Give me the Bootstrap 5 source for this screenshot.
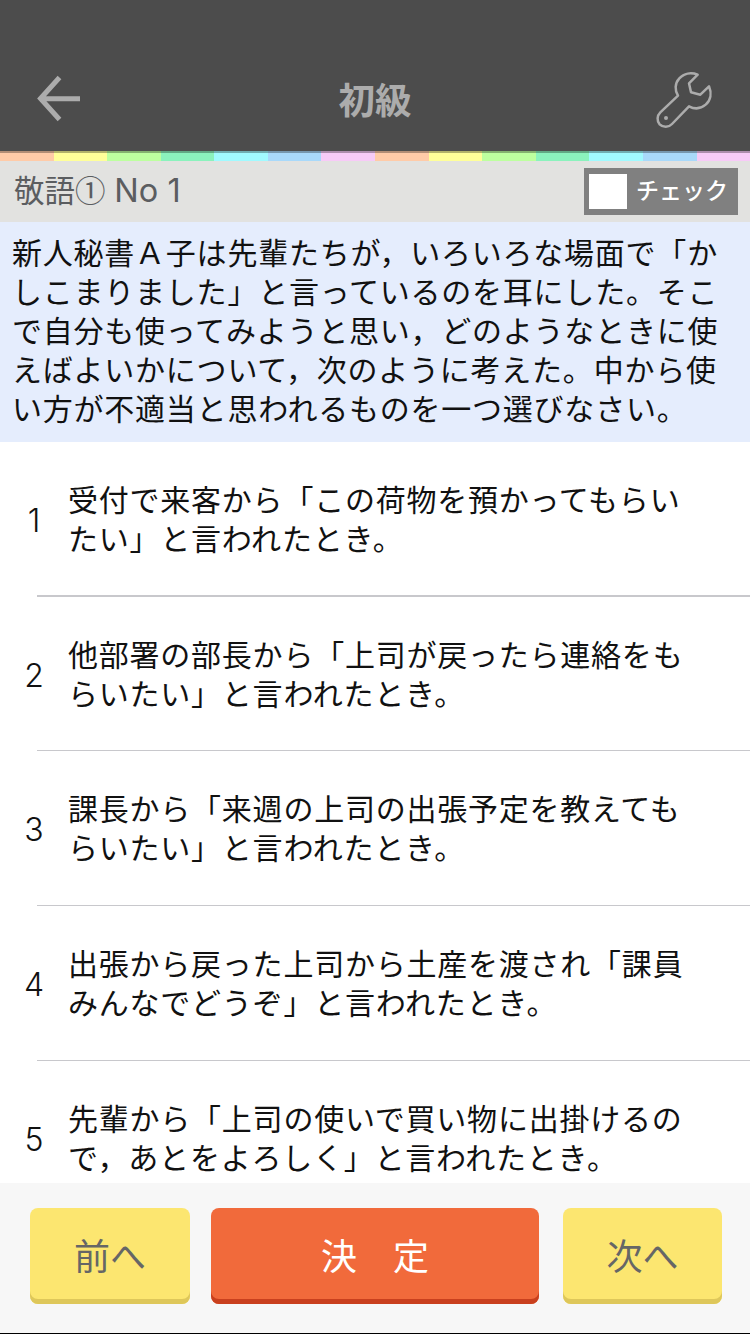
<!DOCTYPE html>
<html lang="ja">
<head>
<meta charset="utf-8">
<meta name="viewport" content="width=device-width, initial-scale=1">
<title>初級</title>
<link href="https://cdn.jsdelivr.net/npm/bootstrap@5.3.0/dist/css/bootstrap.min.css" rel="stylesheet">
<style>
body{font-family:"Noto Sans CJK JP",sans-serif;color:#111;height:1334px;overflow:hidden;background:#fff}
.topbar{height:153px;background:#4c4c4c;padding:70px 35px 0 35px;border-bottom:2px solid rgba(0,0,0,.3);background-clip:padding-box;margin-bottom:-2px;position:relative}
.topbar h1{font-size:36.5px;font-weight:700;color:#acacac;line-height:58px}
.side{width:60px;height:60px}
.stripes{height:10px}
.stripes i{flex:1 1 0}
.subbar{height:61px;background:#e2e2e0;padding:0 12px 0 14px;color:#5b5d60;font-size:30.5px}
.latin{font-family:Inter,sans-serif;font-size:32.5px;margin-left:2px}
.checkbtn{width:154px;height:47px;background:#808080;color:#fff;font-size:23px;font-weight:500;padding-left:5px;margin-top:-1px}
.checkbtn .label{margin:-4px 0 0 9px}
.tick{width:38px;height:35px;background:#fff}
.body-text{font-size:30px;letter-spacing:.77px;line-height:39px;white-space:nowrap}
.question{height:220px;background:#e5edfd;padding:10px 12px}
.choices{height:741px}
.choice{height:154px;padding-bottom:2px}
.choice.short{height:153px}
.choice .num{width:68px;font-family:Inter,sans-serif;font-size:32px;font-weight:300;text-align:center;padding-top:6px}
.rule{height:1px;background:#c8c8cc;margin-left:37px}
.rule.thick{height:2px}
.actions{height:151px;background:#f7f7f7;padding:25px 28px 0 30px;border-bottom:1px solid #000}
.key{height:96px;border:0;border-radius:8px;font-size:36px;font-weight:400;line-height:1;padding:0 0 5px;box-shadow:inset 0 -5px 0 #dec75a}
.key.soft,.key.soft:hover{background:#fce670;color:#666;width:160px}
.key.next,.key.next:hover{width:159px}
.key.main,.key.main:hover{background:#f16a3b;color:#fff;width:328px;margin-left:-3px;box-shadow:inset 0 -5px 0 #c9401e}
</style>
</head>
<body class="d-flex flex-column">
<header class="topbar d-flex justify-content-between flex-shrink-0">
  <svg class="side" viewBox="35 70 60 60" fill="none" stroke="#acacac" stroke-width="5"><path d="M59.5 77.500L40.500 98.500L59.500 119.500M40 98.700H80"/></svg>
  <h1 class="mb-0">初級</h1>
  <svg class="side" viewBox="285 30 180 180" fill="none" stroke="#acacac" stroke-width="7.500" stroke-linejoin="round"><path d="M413 44L387 70L393 97L421 104L447 79C456 100 452 121 437 134C423 146 404 148 387 139L336 192C326 203 309 203 299 193C290 183 291 167 301 157L354 107C344 91 344 70 358 55C372 40 393 36 413 44Z"/><circle cx="318" cy="174" r="6" fill="#acacac" stroke="none"/></svg>
</header>
<div class="stripes d-flex flex-shrink-0">
  <i style="background:#ffcba8"></i><i style="background:#ffff99"></i><i style="background:#bdff9f"></i><i style="background:#8bf2bd"></i><i style="background:#a1faff"></i><i style="background:#a9d9fa"></i><i style="background:#f7cbf7"></i><i style="background:#ffcba8"></i><i style="background:#ffff99"></i><i style="background:#bdff9f"></i><i style="background:#8bf2bd"></i><i style="background:#a1faff"></i><i style="background:#a9d9fa"></i><i style="background:#f7cbf7"></i>
</div>
<div class="subbar d-flex justify-content-between align-items-center flex-shrink-0">
  <div class="text-nowrap">敬語① <span class="latin">No 1</span></div>
  <div class="checkbtn d-flex align-items-center"><span class="tick"></span><span class="label text-nowrap">チェック</span></div>
</div>
<section class="question body-text flex-shrink-0">新人秘書Ａ子は先輩たちが，いろいろな場面で「か<br>しこまりました」と言っているのを耳にした。そこ<br>で自分も使ってみようと思い，どのようなときに使<br>えばよいかについて，次のように考えた。中から使<br>い方が不適当と思われるものを一つ選びなさい。</section>
<main class="choices overflow-hidden flex-shrink-0">
  <div class="choice short d-flex align-items-center"><span class="num">1</span><div class="body-text">受付で来客から「この荷物を預かってもらい<br>たい」と言われたとき。</div></div>
  <div class="rule thick"></div>
  <div class="choice short d-flex align-items-center"><span class="num">2</span><div class="body-text">他部署の部長から「上司が戻ったら連絡をも<br>らいたい」と言われたとき。</div></div>
  <div class="rule"></div>
  <div class="choice d-flex align-items-center"><span class="num">3</span><div class="body-text">課長から「来週の上司の出張予定を教えても<br>らいたい」と言われたとき。</div></div>
  <div class="rule"></div>
  <div class="choice d-flex align-items-center"><span class="num">4</span><div class="body-text">出張から戻った上司から土産を渡され「課員<br>みんなでどうぞ」と言われたとき。</div></div>
  <div class="rule"></div>
  <div class="choice d-flex align-items-center"><span class="num">5</span><div class="body-text">先輩から「上司の使いで買い物に出掛けるの<br>で，あとをよろしく」と言われたとき。</div></div>
</main>
<footer class="actions d-flex flex-shrink-0 justify-content-between">
  <button class="btn key soft">前へ</button>
  <button class="btn key main">決　定</button>
  <button class="btn key soft next">次へ</button>
</footer>
<script src="https://cdn.jsdelivr.net/npm/bootstrap@5.3.0/dist/js/bootstrap.bundle.min.js"></script>
</body>
</html>
